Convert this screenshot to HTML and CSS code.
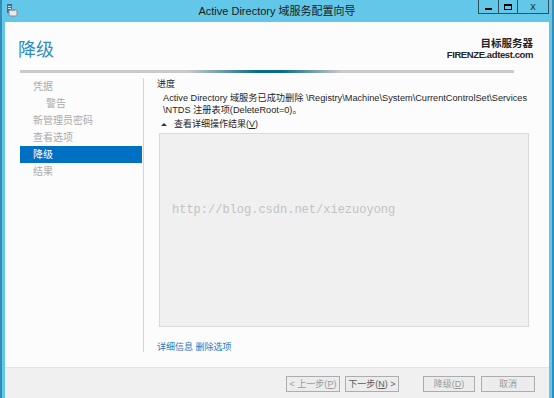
FILE: index.html
```html
<!DOCTYPE html>
<html lang="zh-CN">
<head>
<meta charset="UTF-8">
<title>Active Directory 域服务配置向导</title>
<link rel="stylesheet" href="styles.css">
</head>
<body>
<div class="window">
  <div class="titlebar">
    <div class="app-icon">
      <svg width="12" height="13" viewBox="0 0 12 13">
        <rect x="1" y="0" width="5" height="9" fill="#2f6fb5"/>
        <rect x="2" y="2" width="3" height="1" fill="#cfe3f5"/>
        <rect x="2" y="4" width="3" height="1" fill="#cfe3f5"/>
        <rect x="3" y="6" width="8" height="6" rx="1" fill="#e8e8e8" stroke="#8a8a8a" stroke-width="1"/>
        <rect x="5" y="5" width="4" height="2" fill="#9a9a9a"/>
      </svg>
    </div>
    <div class="title">Active Directory 域服务配置向导</div>
    <div class="controls">
      <span class="ctl ctl-min"><i></i></span>
      <span class="ctl ctl-max"><i></i></span>
      <span class="ctl ctl-close">x</span>
    </div>
  </div>

  <div class="client">
    <div class="main">
      <div class="header">
        <h1>降级</h1>
        <div class="target">
          <div>目标服务器</div>
          <div class="server">FIRENZE.adtest.com</div>
        </div>
      </div>
      <div class="progress-line"></div>

      <div class="body">
        <ul class="nav">
          <li>凭据</li>
          <li class="sub">警告</li>
          <li>新管理员密码</li>
          <li>查看选项</li>
          <li class="active">降级</li>
          <li>结果</li>
        </ul>
        <div class="content">
          <div class="label">进度</div>
          <p class="message">Active Directory 域服务已成功删除 \Registry\Machine\System\CurrentControlSet\Services<br>\NTDS 注册表项(DeleteRoot=0)。</p>
          <div class="toggle"><span class="caret"></span>查看详细操作结果(<u>V</u>)</div>
          <div class="details">
            <div class="watermark">http://blog.csdn.net/xiezuoyong</div>
          </div>
          <div class="links"><a href="#">详细信息</a> <a href="#">删除选项</a></div>
        </div>
      </div>
    </div>

    <div class="footer">
      <button class="btn" disabled>&lt; 上一步(<u>P</u>)</button>
      <button class="btn btn-next">下一步(<u>N</u>) &gt;</button>
      <button class="btn btn-go" disabled>降级(<u>D</u>)</button>
      <button class="btn btn-cancel" disabled>取消</button>
    </div>
  </div>
</div>
</body>
</html>
```

FILE: styles.css
```css
* {
  box-sizing: border-box;
}
body {
  margin: 0;
  font-family: "Liberation Sans", "Noto Sans CJK SC", sans-serif;
  font-size: 10px;
  color: #1e1e1e;
}
.window {
  width: 554px;
  height: 398px;
  background: #62c7e8;
  border-left: 2px solid #2f8fb8;
  border-right: 2px solid #2f8fb8;
  display: flex;
  flex-direction: column;
  overflow: hidden;
}

/* title bar */
.titlebar {
  height: 22px;
  display: grid;
  grid-template-columns: 1fr auto 1fr;
  align-items: start;
}
.app-icon {
  padding: 4px 0 0 4px;
  line-height: 0;
}
.title {
  font-size: 11px;
  line-height: 22px;
  color: #1a1a1a;
}
.controls {
  justify-self: end;
  display: flex;
  margin-right: 3px;
}
.ctl {
  flex: none;
  height: 14px;
  border: 1px solid #34505c;
  border-top: none;
  margin-left: -1px;
  display: flex;
  align-items: center;
  justify-content: center;
}
.ctl-min {
  width: 21px;
}
.ctl-min i {
  width: 7px;
  height: 2px;
  background: #000;
  margin-top: 4px;
}
.ctl-max {
  width: 20px;
}
.ctl-max i {
  width: 8px;
  height: 6px;
  border: 1px solid #000;
  border-top-width: 2px;
}
.ctl-close {
  width: 32px;
  font-family: "DejaVu Sans", sans-serif;
  font-size: 10px;
  color: #2d3c44;
  line-height: 12px;
}

/* client area */
.client {
  flex: 1;
  margin: 0 3px;
  display: flex;
  flex-direction: column;
}
.main {
  flex: 1;
  background: #fcfcfc;
  padding: 0 16px 0 15px;
}
.header {
  height: 48px;
  display: flex;
  justify-content: space-between;
  align-items: flex-start;
}
h1 {
  margin: 14px 0 0 -2px;
  font-family: "Noto Sans CJK SC", sans-serif;
  font-size: 18px;
  font-weight: normal;
  line-height: 24px;
  color: #2d8cc2;
}
.target {
  margin-top: 16px;
  text-align: right;
  font-weight: bold;
  font-size: 10.5px;
  line-height: 11px;
  color: #262626;
}
.target .server {
  font-size: 9.5px;
  letter-spacing: -0.4px;
}
.progress-line {
  height: 3px;
  margin-right: 19px;
  background: linear-gradient(to right, #cacaca 0%, #cacaca 34%, #0a6b8d 48%, #0a6b8d 53%, #cacaca 65%, #cacaca 100%);
}

.body {
  margin-top: 5px;
  height: 274px;
  display: flex;
}
.nav {
  flex: none;
  list-style: none;
  margin: 0;
  padding: 0;
  width: 124px;
  border-right: 1px solid #d6d6d6;
}
.nav li {
  height: 17px;
  line-height: 17px;
  padding-left: 13px;
  margin-right: 1px;
  color: #ababab;
}
.nav li.sub {
  padding-left: 26px;
}
.nav li.active {
  background: #0070c3;
  color: #fff;
}

.content {
  flex: 1;
  padding-left: 13px;
  font-size: 9px;
  line-height: 12px;
}
.message {
  margin: 2px 0 0 6px;
  font-size: 9.2px;
  line-height: 12px;
  white-space: nowrap;
}
.toggle {
  margin-top: 2px;
  padding-left: 4px;
  display: flex;
  align-items: center;
}
.caret {
  width: 0;
  height: 0;
  border-left: 3px solid transparent;
  border-right: 3px solid transparent;
  border-bottom: 3px solid #333;
  margin-right: 7px;
}
.details {
  margin: 3px 0 0 2px;
  width: 370px;
  height: 194px;
  background: #f0f0f0;
  border: 1px solid #dadada;
  padding: 70px 0 0 12px;
}
.watermark {
  font-family: "Liberation Mono", monospace;
  font-size: 12px;
  color: #c3c3c3;
}
.links {
  margin-top: 14px;
}
.links a {
  color: #2a78c0;
  text-decoration: none;
}

/* footer */
.footer {
  height: 31px;
  background: #f0f0f0;
  border-top: 1px solid #e4e4e4;
  display: flex;
  justify-content: flex-end;
  align-items: flex-start;
  padding: 8px 14px 0 0;
}
.btn {
  flex: none;
  height: 16px;
  width: 54px;
  padding: 0;
  margin-left: 5px;
  background: #ececec;
  border: 1px solid #adadad;
  border-radius: 0;
  font-family: "Liberation Sans", "Noto Sans CJK SC", sans-serif;
  font-size: 9px;
  line-height: 14px;
  white-space: nowrap;
  color: #9a9a9a;
}
.btn-next {
  color: #5a5a5a;
}
.btn-go {
  width: 52px;
  margin-left: 24px;
}
.btn-cancel {
  margin-left: 6px;
}
```
